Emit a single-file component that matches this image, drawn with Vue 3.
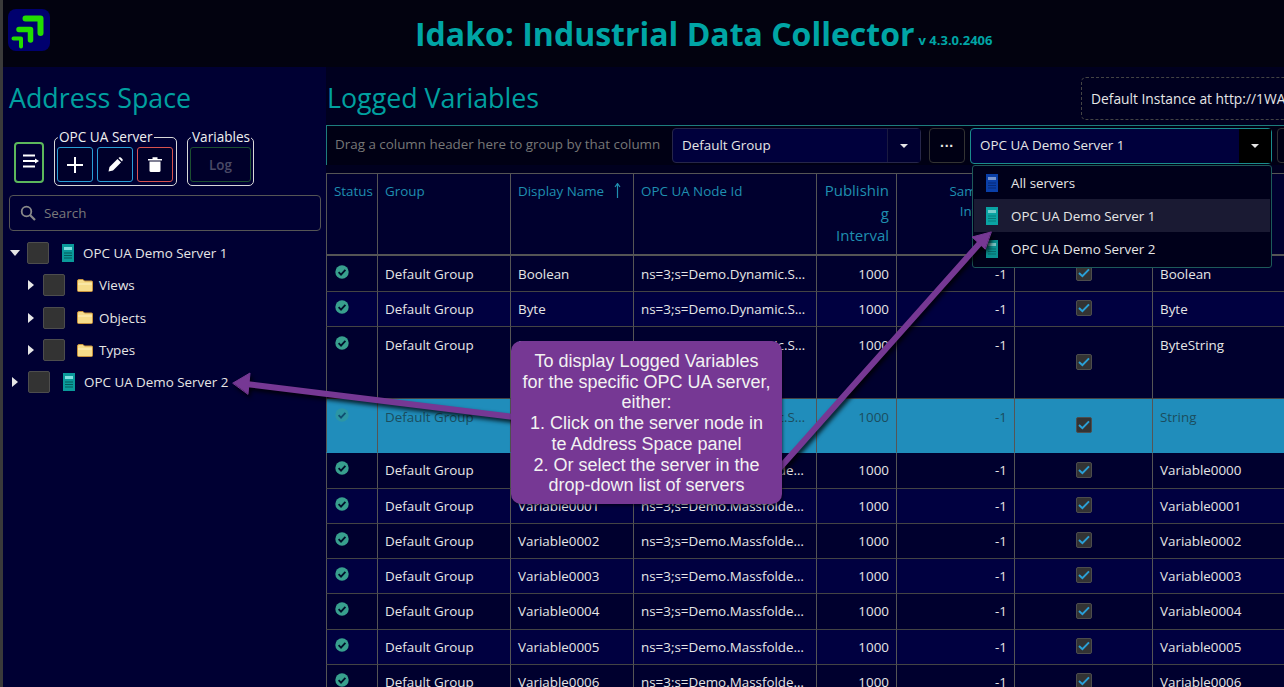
<script setup>
import { ref } from 'vue'

const servers = ref([
  { id: 0, name: 'All servers', color: '#0a3fa8', dark: '#062a78', active: false },
  { id: 1, name: 'OPC UA Demo Server 1', color: '#0aa3a3', dark: '#067a7a', active: true },
  { id: 2, name: 'OPC UA Demo Server 2', color: '#0a9090', dark: '#066a6a', active: false }
])

const folders = ['Views', 'Objects', 'Types']

const dyn = 'ns=3;s=Demo.Dynamic.Scalar.'
const mass = 'ns=3;s=Demo.Massfolder_Dynamic.'

// altura de cada fila tal como sale en la captura
const filas = ref([
  { name: 'Boolean', node: dyn + 'Boolean', h: 36, low: true },
  { name: 'Byte', node: dyn + 'Byte', h: 35 },
  { name: 'ByteString', node: dyn + 'ByteString', h: 72, low: true },
  { name: 'String', node: dyn + 'String', h: 54, low: true, selected: true },
  { name: 'Variable0000', node: mass + 'Variable0000', h: 36 },
  { name: 'Variable0001', node: mass + 'Variable0001', h: 35 },
  { name: 'Variable0002', node: mass + 'Variable0002', h: 35 },
  { name: 'Variable0003', node: mass + 'Variable0003', h: 35 },
  { name: 'Variable0004', node: mass + 'Variable0004', h: 36 },
  { name: 'Variable0005', node: mass + 'Variable0005', h: 35 },
  { name: 'Variable0006', node: mass + 'Variable0006', h: 35 }
])
</script>

<template>
  <div class="app">
    <header class="header">
      <svg class="logo" viewBox="0 0 42 42">
        <rect width="42" height="42" rx="8" fill="#00006e" />
        <g fill="none" stroke="#22dd00" stroke-linejoin="round" stroke-linecap="round">
          <path d="M17.5 9.5H32.5V24" stroke-width="6" />
          <path d="M11 20.5H22.5V31" stroke-width="5.5" />
          <path d="M5.5 29.5H13V37.5" stroke-width="4" />
        </g>
      </svg>
      <h1 class="app-title">Idako: Industrial Data Collector</h1>
      <span class="version">v 4.3.0.2406</span>
    </header>

    <div class="body">
      <aside class="sidebar">
        <h2 class="panel-title">Address Space</h2>

        <div class="tools">
          <button class="btn-list">
            <svg width="18" height="14" viewBox="0 0 18 14">
              <path d="M1 1.5H13M1 7H13M1 12.5H13" stroke="#fff" stroke-width="2" />
              <path d="M13 4.5L17 7L13 9.5Z" fill="#fff" />
            </svg>
          </button>

          <fieldset class="group">
            <legend>OPC UA Server</legend>
            <button class="btn-tool blue">
              <svg width="16" height="16" viewBox="0 0 16 16"><path d="M8 0V16M0 8H16" stroke="#fff" stroke-width="2" /></svg>
            </button>
            <button class="btn-tool blue">
              <svg width="15" height="15" viewBox="0 0 15 15">
                <path d="M0.5 14.5L1.5 10L9.5 2L13 5.5L5 13.5Z" fill="#fff" />
                <path d="M10.5 1L11.5 0.3Q12.2 0 12.8 0.5L14.5 2.2Q15 2.8 14.6 3.5L14 4.5Z" fill="#fff" />
              </svg>
            </button>
            <button class="btn-tool red">
              <svg width="14" height="15" viewBox="0 0 14 15">
                <path d="M0 2H14V3.6H0ZM4.5 0.3H9.5V2H4.5Z" fill="#fff" />
                <path d="M1.5 4.6H12.5V13.5Q12.5 15 11 15H3Q1.5 15 1.5 13.5Z" fill="#fff" />
              </svg>
            </button>
          </fieldset>

          <fieldset class="group vars">
            <legend>Variables</legend>
            <button class="btn-log">Log</button>
          </fieldset>
        </div>

        <div class="search">
          <svg width="16" height="16" viewBox="0 0 16 16" fill="none" stroke="#8a8a8a" stroke-width="1.8">
            <circle cx="6.5" cy="6.5" r="4.8" />
            <path d="M10 10L15 15" stroke-width="2.2" />
          </svg>
          <span>Search</span>
        </div>

        <ul class="tree">
          <li class="node">
            <span class="caret down"></span>
            <span class="tree-check"></span>
            <svg class="srv" width="12" height="18" viewBox="0 0 12 18">
              <rect width="12" height="18" fill="#0a9a9a" />
              <rect x="2" y="3" width="8" height="3" fill="#7fe0e0" />
              <path d="M2 9H10M2 11.5H10M2 14H10" stroke="#035a5a" stroke-width="1" />
            </svg>
            <span class="label">OPC UA Demo Server 1</span>
          </li>
          <li v-for="f in folders" :key="f" class="node child">
            <span class="caret"></span>
            <span class="tree-check"></span>
            <svg class="folder" width="16" height="13" viewBox="0 0 16 13">
              <path d="M0.5 2Q0.5 0.5 2 0.5H6L7.5 2H14.5Q15.5 2 15.5 3V11.5Q15.5 12.5 14.5 12.5H1.5Q0.5 12.5 0.5 11.5Z" fill="#f6dc8a" stroke="#c8923c" />
              <path d="M1 5H15" stroke="#fff2c0" />
            </svg>
            <span class="label">{{ f }}</span>
          </li>
          <li class="node">
            <span class="caret"></span>
            <span class="tree-check"></span>
            <svg class="srv" width="12" height="18" viewBox="0 0 12 18">
              <rect width="12" height="18" fill="#0a9a9a" />
              <rect x="2" y="3" width="8" height="3" fill="#7fe0e0" />
              <path d="M2 9H10M2 11.5H10M2 14H10" stroke="#035a5a" stroke-width="1" />
            </svg>
            <span class="label">OPC UA Demo Server 2</span>
          </li>
        </ul>
      </aside>

      <main class="main">
        <div class="main-top">
          <h2 class="panel-title">Logged Variables</h2>
          <div class="instance">Default Instance at http://1WA2</div>
        </div>

        <div class="toolbar">
          <div class="drag-hint">Drag a column header here to group by that column</div>
          <div class="select group-select">
            <span class="select-text">Default Group</span>
            <span class="select-arrow"><i class="tri"></i></span>
          </div>
          <button class="btn-more">···</button>
          <div class="select server-select">
            <span class="select-text">OPC UA Demo Server 1</span>
            <span class="select-arrow"><i class="tri"></i></span>
          </div>
          <button class="btn-next"></button>
        </div>

        <table class="grid">
          <colgroup>
            <col style="width: 51px" />
            <col style="width: 133px" />
            <col style="width: 123px" />
            <col style="width: 183px" />
            <col style="width: 80px" />
            <col style="width: 118px" />
            <col style="width: 138px" />
            <col style="width: 132px" />
          </colgroup>
          <thead>
            <tr>
              <th>Status</th>
              <th>Group</th>
              <th>
                <span class="sort-head">
                  Display Name
                  <svg width="7" height="15" viewBox="0 0 7 15"><path d="M3.5 15V1M1 4L3.5 0.5L6 4" fill="none" stroke="#1f8fb0" stroke-width="1.2" /></svg>
                </span>
              </th>
              <th>OPC UA Node Id</th>
              <th class="num big">Publishin<br />g<br />Interval</th>
              <th class="num">Sampling<br />Interval</th>
              <th></th>
              <th></th>
            </tr>
          </thead>
          <tbody>
            <tr
              v-for="(f, i) in filas"
              :key="f.name"
              :class="{ selected: f.selected, alt: i % 2 === 1, low: f.low }"
              :style="{ height: f.h + 'px' }"
            >
              <td>
                <svg class="ok" width="14" height="14" viewBox="0 0 14 14">
                  <circle cx="7" cy="7" r="6.7" fill="#38a08e" />
                  <path d="M3.6 7.2L6 9.6L10.4 4.8" fill="none" stroke="#00102a" stroke-width="1.8" />
                </svg>
              </td>
              <td>Default Group</td>
              <td>{{ f.name }}</td>
              <td class="ellipsis">{{ f.node }}</td>
              <td class="num">1000</td>
              <td class="num">-1</td>
              <td class="center">
                <span class="check">
                  <svg width="12" height="10" viewBox="0 0 12 10"><path d="M1 5L4.4 8.2L11 1.4" fill="none" stroke="#2a9fd6" stroke-width="2" /></svg>
                </span>
              </td>
              <td>{{ f.name }}</td>
            </tr>
          </tbody>
        </table>
      </main>
    </div>

    <ul class="dropdown">
      <li v-for="s in servers" :key="s.id" :class="{ active: s.active }">
        <svg width="12" height="18" viewBox="0 0 12 18">
          <rect width="12" height="18" :fill="s.color" />
          <rect x="2" y="3" width="8" height="3" fill="#ffffff" opacity="0.45" />
          <path d="M2 9H10M2 11.5H10M2 14H10" :stroke="s.dark" stroke-width="1" />
        </svg>
        <span>{{ s.name }}</span>
      </li>
    </ul>

    <!-- anotaciones encima de la captura -->
    <svg class="arrows" width="1284" height="687" viewBox="0 0 1284 687">
      <g fill="#763894" stroke="#763894" stroke-linecap="round">
        <path d="M514 417L246 384" fill="none" stroke-width="6" />
        <path d="M233 383L250 373L248 394Z" stroke-width="1" stroke-linejoin="round" />
        <path d="M778 470L980 243" fill="none" stroke-width="6" />
        <path d="M991 232L972 237L985 249Z" stroke-width="1" stroke-linejoin="round" />
      </g>
    </svg>

    <div class="callout">
      To display Logged Variables<br />
      for the specific OPC UA server,<br />
      either:<br />
      1. Click on the server node in<br />
      te Address Space panel<br />
      2. Or select the server in the<br />
      drop-down list of servers
    </div>
  </div>
</template>

<style scoped>
.app {
  position: relative;
  width: 1284px;
  height: 687px;
  overflow: hidden;
  box-sizing: border-box;
  border-left: 3px solid #3a3a3a;
  background: #02020f;
  color: #e6e6e6;
  font-family: "Open Sans", "Noto Sans", sans-serif;
  font-size: 13.4px;
  display: flex;
  flex-direction: column;
}

.header {
  flex: none;
  height: 67px;
  display: flex;
  align-items: center;
}

.logo {
  width: 42px;
  height: 42px;
  margin: -7px 0 0 5px;
}

.app-title {
  margin: 0 0 0 365px;
  font-size: 32px;
  font-weight: 700;
  color: #00a5a5;
  white-space: nowrap;
}

.version {
  margin: 13px 0 0 4px;
  font-size: 13px;
  font-weight: 700;
  color: #00a5a5;
}

.body {
  flex: 1;
  min-height: 0;
  display: flex;
}

.sidebar {
  flex: none;
  width: 323px;
  box-sizing: border-box;
  padding: 0 5px 0 6px;
  background: #000033;
}

.panel-title {
  margin: 0;
  font-size: 26.8px;
  font-weight: 400;
  line-height: 36px;
  color: #00a0a0;
  padding-top: 13px;
}

.tools {
  display: flex;
  align-items: flex-end;
  margin-top: 12px;
  height: 58px;
}

.btn-list {
  width: 30px;
  height: 41px;
  margin: 0 10px 3px 5px;
  padding: 0 0 0 4px;
  background: transparent;
  border: 2.5px solid #5cb85c;
  border-radius: 4px;
}

.group {
  display: flex;
  gap: 4px;
  height: 58px;
  width: 123px;
  box-sizing: border-box;
  margin: 0;
  padding: 0 2px 3px;
  border: 1.5px solid #d8d8d8;
  border-radius: 5px;
}

.group legend {
  padding: 0 1px;
  margin-left: 1px;
  font-size: 13.6px;
  line-height: 18px;
  color: #f0f0f0;
}

.group.vars {
  width: 67px;
  margin-left: 10px;
}

.btn-tool {
  width: 36px;
  height: 35px;
  margin-top: 1px;
  padding: 0;
  background: #00002a;
  border: 1px solid #2a9fd6;
  border-radius: 3px;
  display: flex;
  align-items: center;
  justify-content: center;
}

.btn-tool.red {
  border-color: #d9534f;
}

.btn-log {
  width: 61px;
  height: 35px;
  margin-top: 1px;
  padding: 0;
  background: #00002a;
  border: 1px solid #1c5030;
  border-radius: 3px;
  color: #4a4a66;
  font-family: inherit;
  font-size: 13.4px;
  font-weight: 600;
}

.search {
  display: flex;
  align-items: center;
  gap: 8px;
  height: 36px;
  box-sizing: border-box;
  margin-top: 9px;
  padding-left: 10px;
  border: 1px solid #555;
  border-radius: 4px;
  color: #7a7a7a;
}

.tree {
  list-style: none;
  margin: 6px 0 0;
  padding: 0;
}

.node {
  display: flex;
  align-items: center;
  height: 32.3px;
}

.caret {
  width: 0;
  height: 0;
  margin: 0 10px 0 3px;
  border-style: solid;
  border-width: 5px 0 5px 6px;
  border-color: transparent transparent transparent #e6e6e6;
}

.caret.down {
  margin: 0 7px 0 1px;
  border-width: 6px 5.5px 0 5.5px;
  border-color: #e6e6e6 transparent transparent transparent;
}

.child {
  padding-left: 16px;
}

.child .caret {
  margin: 0 9px 0 3px;
}

.tree-check {
  flex: none;
  width: 20px;
  height: 20px;
  background: #333;
  border: 1px solid #4d4d4d;
  border-radius: 2px;
}

.srv {
  margin-left: 13px;
}

.folder {
  margin-left: 12px;
}

.label {
  margin-left: 9px;
}

.child .label {
  margin-left: 6px;
}

.main {
  flex: 1;
  min-width: 0;
  background: #00001f;
}

.main-top {
  display: flex;
  justify-content: space-between;
  height: 58px;
  padding-left: 1px;
}

.instance {
  flex: none;
  box-sizing: border-box;
  width: 240px;
  height: 43px;
  margin: 10px -37px 0 0;
  padding-left: 9px;
  font-size: 13.8px;
  line-height: 41px;
  white-space: nowrap;
  overflow: hidden;
  border: 1px dashed #444;
  border-radius: 5px;
}

.toolbar {
  display: flex;
  align-items: flex-start;
  height: 40px;
  box-sizing: border-box;
  padding-top: 2px;
  background: #000014;
  border-top: 1px solid #1d7d7d;
  border-left: 1px solid #1d7d7d;
  white-space: nowrap;
}

.drag-hint {
  flex: none;
  width: 345px;
  box-sizing: border-box;
  padding: 7px 0 0 8px;
  color: #777;
}

.select {
  flex: none;
  display: flex;
  height: 35px;
  box-sizing: border-box;
  background: #00003c;
  border: 1px solid #26264a;
  border-radius: 4px;
}

.group-select {
  width: 249px;
}

.server-select {
  width: 302px;
  height: 36px;
  margin-left: 5px;
  border: 1.5px solid #1a8c8c;
}

.select-text {
  flex: 1;
  padding-left: 9px;
  line-height: 32px;
}

.select-arrow {
  flex: none;
  width: 32px;
  display: flex;
  align-items: center;
  justify-content: center;
  background: #000030;
  border-left: 1px solid #1a1a40;
}

.server-select .select-arrow {
  background: #000;
  border-left: none;
}

.tri {
  width: 0;
  height: 0;
  border-style: solid;
  border-width: 4px 4px 0 4px;
  border-color: #e6e6e6 transparent transparent transparent;
}

.btn-more {
  flex: none;
  width: 36px;
  height: 35px;
  margin-left: 8px;
  padding: 0;
  background: #000014;
  border: 1px solid #333;
  border-radius: 4px;
  color: #e6e6e6;
  font-size: 14px;
  font-weight: 700;
}

.btn-next {
  flex: none;
  width: 36px;
  height: 35px;
  margin-left: 5px;
  background: #000014;
  border: 1px solid #333;
  border-radius: 4px;
}

.grid {
  width: 958px;
  margin-top: 8px;
  table-layout: fixed;
  border-collapse: separate;
  border-spacing: 0;
  background: #00002e;
}

.grid th,
.grid td {
  box-sizing: border-box;
  padding: 7px 8px 0 7px;
  border-left: 1px solid #555;
  border-bottom: 1px solid #444;
  vertical-align: top;
  font-weight: 400;
  line-height: 20px;
  text-align: left;
  white-space: nowrap;
}

.grid tr.low td {
  padding-top: 8px;
}

.grid th {
  height: 83px;
  padding-top: 7px;
  border-top: 1px solid #555;
  border-bottom: 2px solid #555;
  color: #1f8fb0;
  background: #00002e;
}

.grid th.big {
  padding-top: 5px;
  font-size: 15px;
  line-height: 22.5px;
}

.grid th.num,
.grid td.num {
  text-align: right;
  padding-right: 7px;
}

.sort-head {
  display: flex;
  gap: 10px;
  align-items: flex-start;
}

.sort-head svg {
  margin-top: 2px;
}

.grid tr.alt td {
  background: #000040;
}

.grid tr.selected td {
  background: #208dbb;
  color: #1b4d5e;
  border-bottom-color: #208dbb;
}

.grid tr.selected .ok {
  opacity: 0.5;
}

.grid tr td.center {
  padding: 0;
  vertical-align: middle;
}

.grid td.ellipsis {
  overflow: hidden;
  text-overflow: ellipsis;
}

.ok {
  display: block;
  margin-left: 1px;
  margin-top: 1px;
}

.check {
  display: flex;
  align-items: center;
  justify-content: center;
  width: 16px;
  height: 16px;
  margin: -2px auto 0;
  background: #333;
  border: 1px solid #4d4d4d;
  border-radius: 2px;
  box-sizing: border-box;
}

.dropdown {
  position: absolute;
  left: 969px;
  top: 165px;
  width: 300px;
  height: 103px;
  box-sizing: border-box;
  margin: 0;
  padding: 0 1px;
  list-style: none;
  background: #00001a;
  border: 1px solid #1d5a5a;
  border-radius: 3px;
}

.dropdown li {
  display: flex;
  align-items: center;
  gap: 13px;
  height: 33px;
  padding-left: 12px;
}

.dropdown li.active {
  background: #1a1a33;
}

.arrows {
  position: absolute;
  left: -3px;
  top: 0;
  filter: drop-shadow(2px 3px 2px rgba(0, 0, 0, 0.8));
}

.callout {
  position: absolute;
  left: 508px;
  top: 341px;
  width: 271px;
  height: 163px;
  box-sizing: border-box;
  padding-top: 10px;
  background: #763894;
  border-radius: 10px;
  box-shadow: 1px 2px 3px rgba(0, 0, 0, 0.5);
  color: #f2f2f2;
  font-family: "Liberation Sans", Arial, sans-serif;
  font-size: 18px;
  line-height: 20.7px;
  text-align: center;
  white-space: nowrap;
}
</style>
